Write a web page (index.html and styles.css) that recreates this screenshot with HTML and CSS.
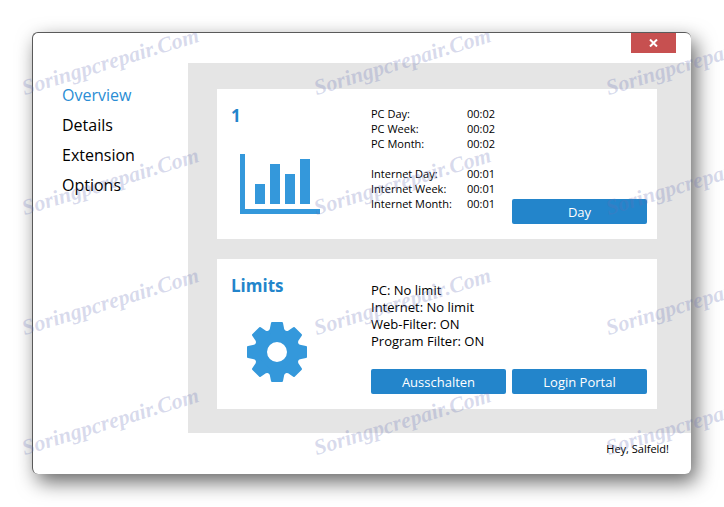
FILE: index.html
```
<!DOCTYPE html>
<html lang="en">
<head>
    <meta charset="utf-8">
    <meta name="viewport" content="width=device-width, initial-scale=1.0">
    <title>Overview</title>
    <link rel="stylesheet" href="styles.css">
</head>
<body>
    <div class="window">
        <header class="titlebar">
            <button class="close" aria-label="Close">
                <svg width="9" height="8" viewBox="0 0 9 8"><path d="M1 0.5 L8 7.5 M8 0.5 L1 7.5" stroke="#fff" stroke-width="2"/></svg>
            </button>
        </header>
        <div class="main">
            <nav class="menu">
                <a href="#" class="active">Overview</a>
                <a href="#">Details</a>
                <a href="#">Extension</a>
                <a href="#">Options</a>
            </nav>
            <main class="content">
                <section class="card">
                    <div class="card-side">
                        <h2>1</h2>
                        <svg class="chart" width="80" height="60" viewBox="0 0 80 60" fill="#3498db">
                            <path d="M0 0h5v55h75v5H0z"/>
                            <path d="M15 30h10v20H15zM30 10h10v40H30zM45 20h10v30H45zM60 5h10v45H60z"/>
                        </svg>
                    </div>
                    <div class="card-body">
                        <table class="times">
                            <tbody>
                                <tr><th scope="row">PC Day:</th><td>00:02</td></tr>
                                <tr><th scope="row">PC Week:</th><td>00:02</td></tr>
                                <tr><th scope="row">PC Month:</th><td>00:02</td></tr>
                            </tbody>
                            <tbody class="internet">
                                <tr><th scope="row">Internet Day:</th><td>00:01</td></tr>
                                <tr><th scope="row">Internet Week:</th><td>00:01</td></tr>
                                <tr><th scope="row">Internet Month:</th><td>00:01</td></tr>
                            </tbody>
                        </table>
                        <button class="btn">Day</button>
                    </div>
                </section>
                <section class="card">
                    <div class="card-side">
                        <h2>Limits</h2>
                        <svg class="gear" width="60" height="60" viewBox="-30 -30 60 60" fill="#3498db">
                            <circle r="16" fill="none" stroke="#3498db" stroke-width="12"/>
                            <g id="teeth">
                                <path id="tooth" d="M-6 -29 Q-5.8 -30 -5 -30 H5 Q5.8 -30 6 -29 L7.2 -23 Q7.5 -22 9 -21 L8 -17 H-8 L-9 -21 Q-7.5 -22 -7.2 -23 Z"/>
                                <use href="#tooth" transform="rotate(45)"/>
                                <use href="#tooth" transform="rotate(90)"/>
                                <use href="#tooth" transform="rotate(135)"/>
                            </g>
                            <use href="#teeth" transform="rotate(180)"/>
                        </svg>
                    </div>
                    <div class="card-body limits">
                        <ul>
                            <li>PC: No limit</li>
                            <li>Internet: No limit</li>
                            <li>Web-Filter: ON</li>
                            <li>Program Filter: ON</li>
                        </ul>
                        <div class="buttons">
                            <button class="btn">Ausschalten</button>
                            <button class="btn">Login Portal</button>
                        </div>
                    </div>
                </section>
            </main>
        </div>
        <footer class="footer">Hey, Salfeld!</footer>
    </div>

    <div class="watermark">
        <span>Soringpcrepair.Com</span><span>Soringpcrepair.Com</span><span>Soringpcrepair.Com</span>
        <span>Soringpcrepair.Com</span><span>Soringpcrepair.Com</span><span>Soringpcrepair.Com</span>
        <span>Soringpcrepair.Com</span><span>Soringpcrepair.Com</span><span>Soringpcrepair.Com</span>
        <span>Soringpcrepair.Com</span><span>Soringpcrepair.Com</span><span>Soringpcrepair.Com</span>
    </div>
</body>
</html>
```
FILE: styles.css
```
* {
    box-sizing: border-box;
}

body {
    margin: 0;
    padding: 32px 33px 33px 32px;
    position: relative;
    background: #fff;
    color: #000;
    font-family: "Open Sans", "Noto Sans", sans-serif;
    font-size: 12px;
}

.window {
    background: #fff;
    border-top: 1px solid #5a5a5a;
    border-left: 1px solid #5a5a5a;
    border-radius: 6px;
    box-shadow: 5px 8px 20px rgba(0, 0, 0, 0.6);
}

.titlebar {
    display: flex;
    justify-content: flex-end;
    align-items: flex-start;
    height: 30px;
    padding-right: 15px;
}

.close {
    display: flex;
    justify-content: center;
    align-items: center;
    width: 45px;
    height: 20px;
    padding: 0;
    border: none;
    background: #c75050;
    cursor: pointer;
}

.main {
    display: grid;
    grid-template-columns: 155px 1fr;
}

.menu {
    display: flex;
    flex-direction: column;
    padding: 17px 0 0 29px;
}

.menu a {
    color: #000;
    font-size: 16px;
    line-height: 30px;
    text-decoration: none;
}

.menu .active {
    color: #2a8dd4;
}

.content {
    display: flex;
    flex-direction: column;
    gap: 20px;
    padding: 26px 34px 24px 29px;
    background: #e5e5e5;
}

.card {
    display: grid;
    grid-template-columns: 140px 1fr;
    min-height: 150px;
    padding: 15px 10px 15px 14px;
    background: #fff;
}

.card h2 {
    margin: 0;
    color: #2385cb;
    font-size: 17px;
    line-height: 24px;
}

.chart {
    display: block;
    margin: 26px 0 0 9px;
}

.gear {
    display: block;
    margin: 24px 0 0 16px;
}

.card-body {
    display: flex;
    justify-content: space-between;
    align-items: flex-end;
}

.times {
    align-self: flex-start;
    margin-top: 2px;
    border-collapse: collapse;
    font-size: 11px;
    line-height: 15px;
}

.times th {
    width: 96px;
    padding: 0;
    font-weight: normal;
    text-align: left;
}

.times td {
    padding: 0;
}

.internet::before {
    content: "";
    display: block;
    height: 15px;
}

.limits {
    flex-direction: column;
    align-items: stretch;
}

.limits ul {
    margin: 8px 0 0;
    padding: 0;
    list-style: none;
    font-size: 13px;
    line-height: 17px;
}

.buttons {
    display: flex;
    justify-content: flex-end;
    gap: 6px;
}

.btn {
    width: 135px;
    height: 25px;
    padding: 0;
    border: none;
    border-radius: 2px;
    background: #2385cb;
    color: #fff;
    font-family: inherit;
    font-size: 13px;
    cursor: pointer;
}

.footer {
    padding: 8px 22px 17px 0;
    font-size: 11px;
    line-height: 16px;
    text-align: right;
}

/* Repeated site mark over the whole page */
.watermark {
    position: absolute;
    inset: 0;
    display: grid;
    grid-template-columns: repeat(3, 292px);
    grid-auto-rows: 120px;
    padding-left: 26px;
    overflow: hidden;
    pointer-events: none;
}

.watermark span {
    align-self: end;
    height: 24px;
    margin-bottom: 20px;
    color: rgba(100, 110, 180, 0.25);
    font-family: "Liberation Serif", serif;
    font-size: 22px;
    font-style: italic;
    font-weight: bold;
    line-height: 24px;
    white-space: nowrap;
    transform: rotate(-17deg);
    transform-origin: left bottom;
}
```
